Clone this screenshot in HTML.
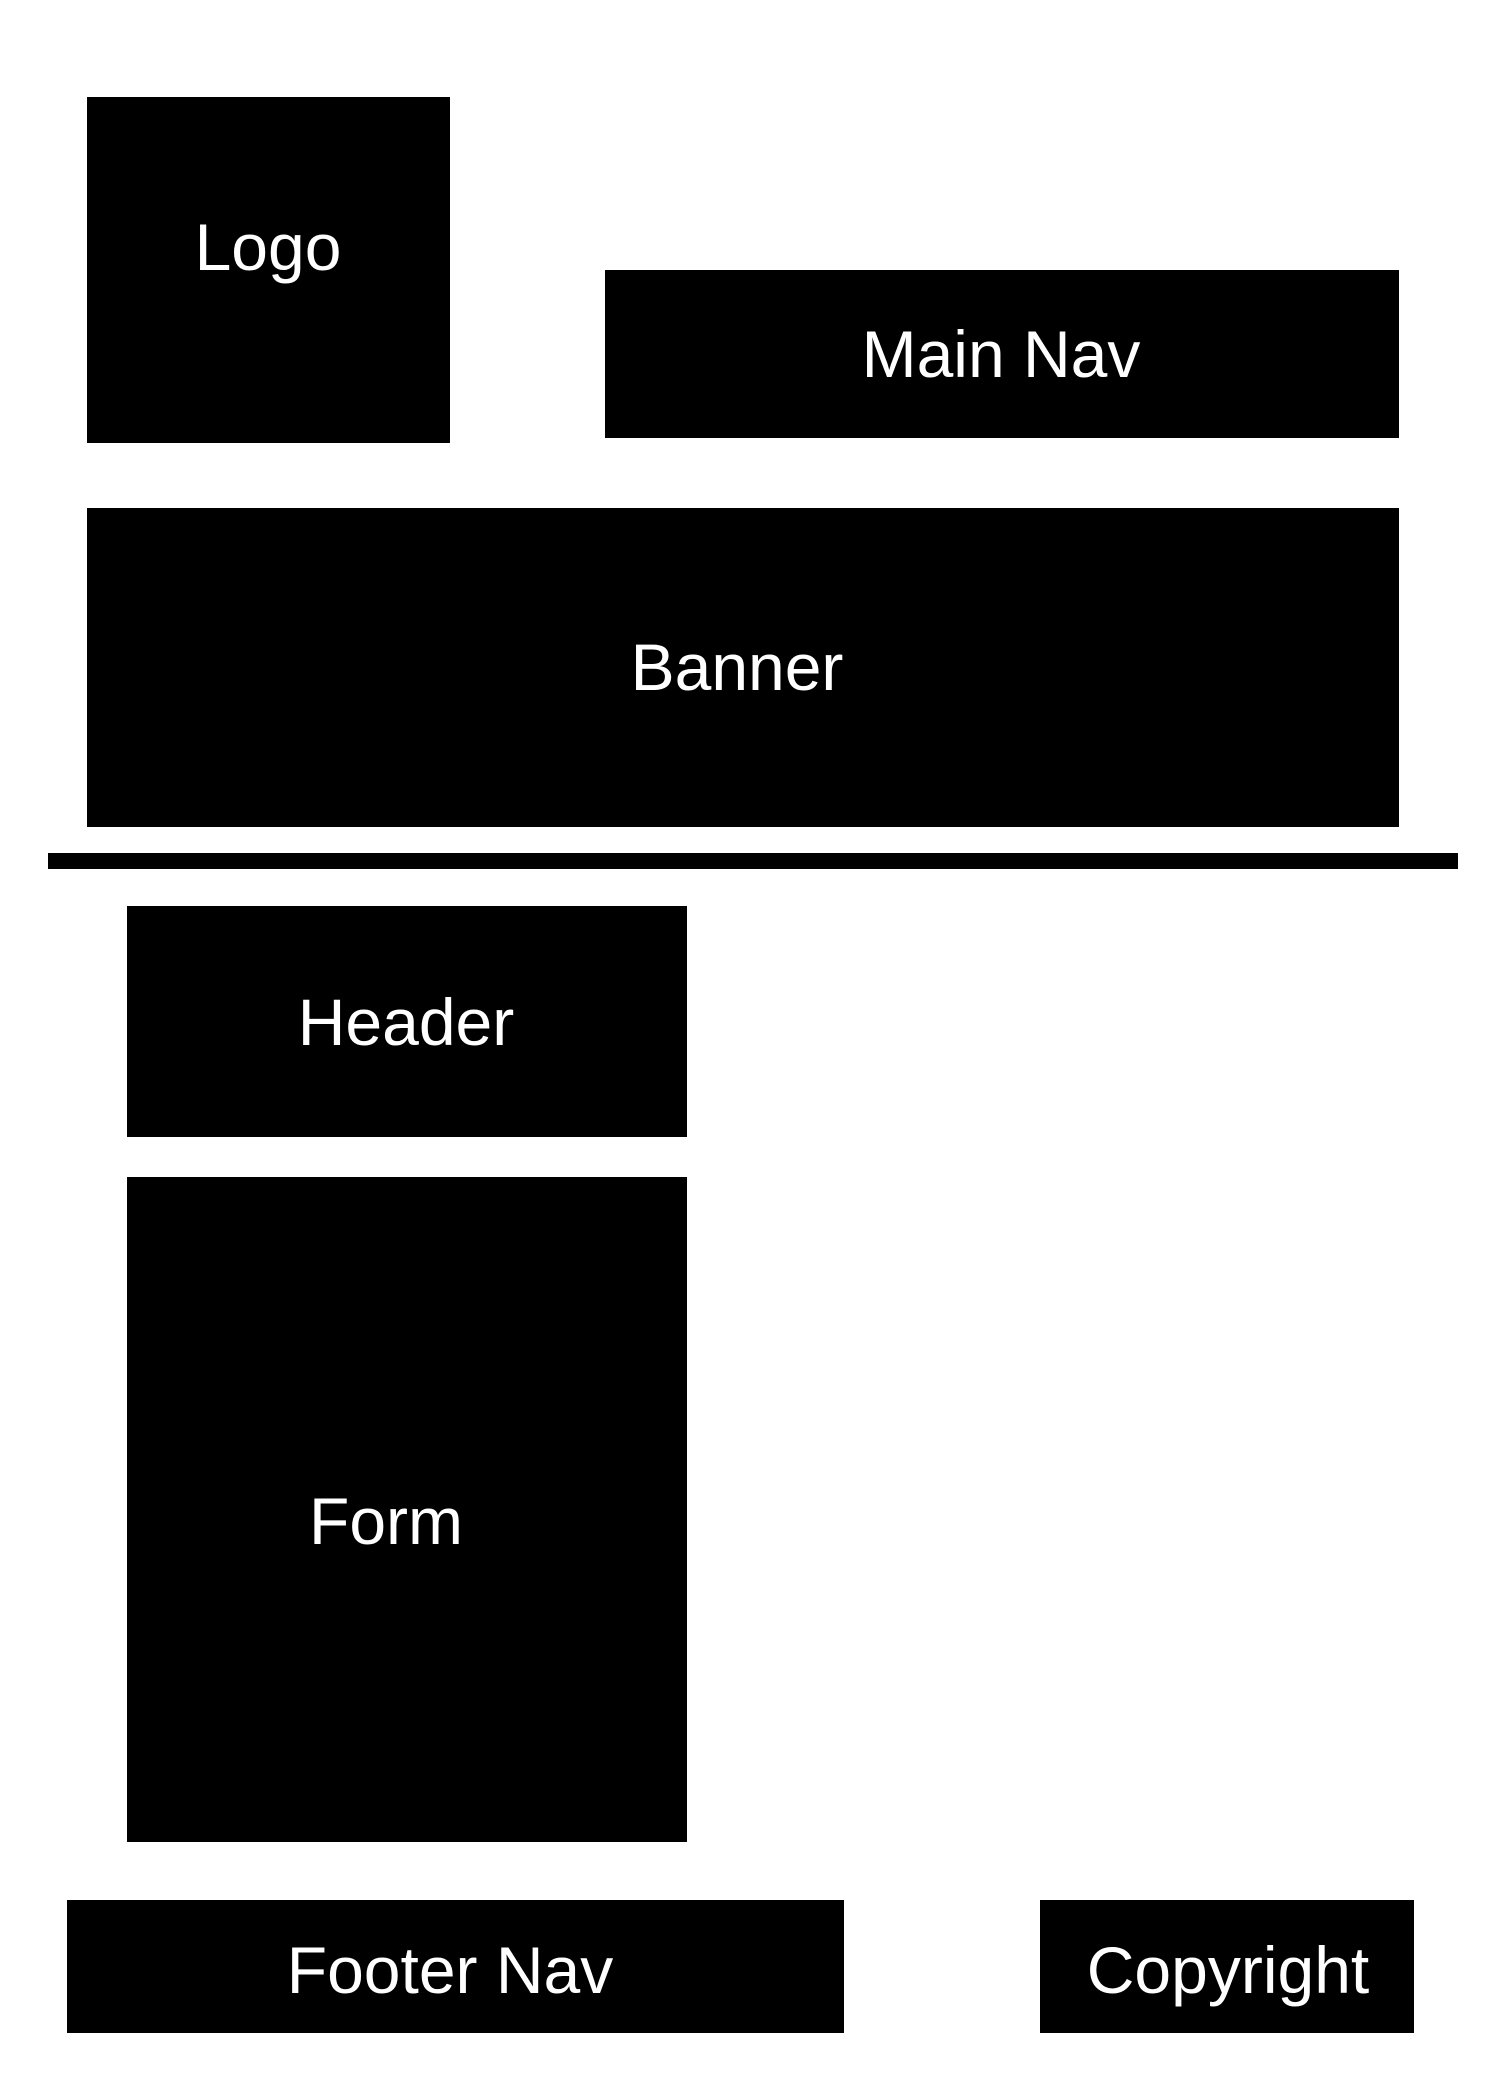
<!DOCTYPE html>
<html><head><meta charset="utf-8"><style>
html,body{margin:0;padding:0;background:#fff;}
body{width:1500px;height:2100px;position:relative;overflow:hidden;font-family:"Liberation Sans",sans-serif;}
.b{position:absolute;background:#000;}
.t{position:absolute;color:#fff;font-size:66px;line-height:1;white-space:nowrap;transform:translateX(-50%);}
</style></head><body>
<div class="b" style="left:87px;top:97px;width:363px;height:346px"></div>
<div class="b" style="left:605px;top:270px;width:794px;height:168px"></div>
<div class="b" style="left:87px;top:508px;width:1312px;height:319px"></div>
<div class="b" style="left:48px;top:853px;width:1410px;height:16px"></div>
<div class="b" style="left:127px;top:906px;width:560px;height:231px"></div>
<div class="b" style="left:127px;top:1177px;width:560px;height:665px"></div>
<div class="b" style="left:67px;top:1900px;width:777px;height:133px"></div>
<div class="b" style="left:1040px;top:1900px;width:374px;height:133px"></div>
<div class="t" style="left:268px;top:214px">Logo</div>
<div class="t" style="left:1001px;top:321px">Main Nav</div>
<div class="t" style="left:737px;top:634px">Banner</div>
<div class="t" style="left:406px;top:989px">Header</div>
<div class="t" style="left:386px;top:1488px">Form</div>
<div class="t" style="left:450px;top:1937px">Footer Nav</div>
<div class="t" style="left:1228px;top:1937px">Copyright</div>
</body></html>
